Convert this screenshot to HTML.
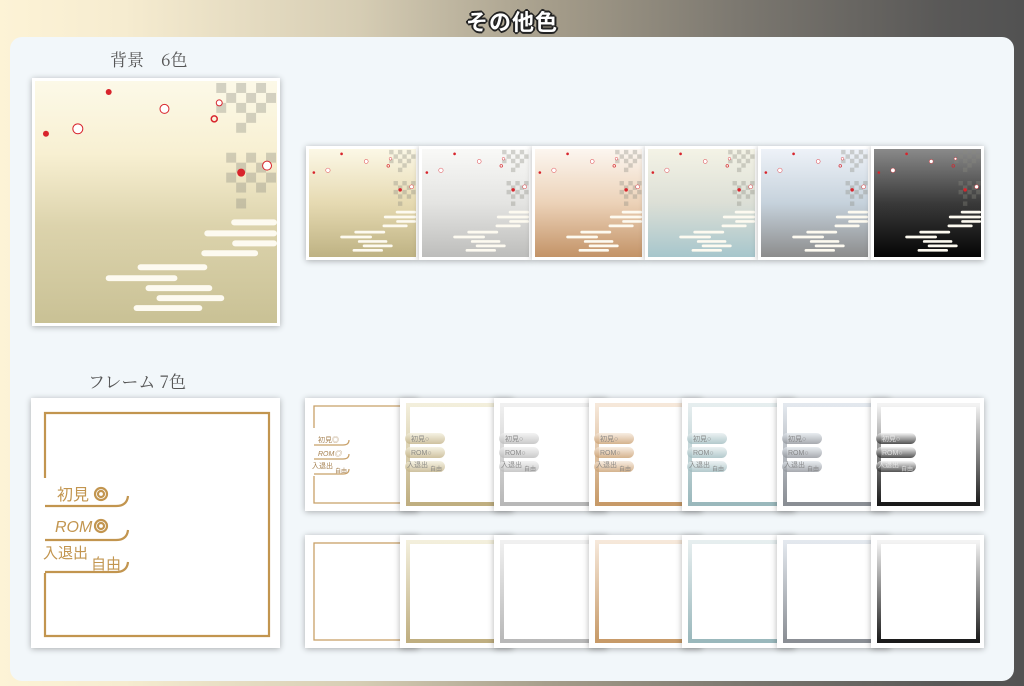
<!DOCTYPE html>
<html><head><meta charset="utf-8">
<style>
*{margin:0;padding:0;box-sizing:border-box}
body{width:1024px;height:686px;overflow:hidden;position:relative;font-family:"Liberation Sans","Noto Sans CJK JP",sans-serif;
background:linear-gradient(90deg,#fdf3d6 0%,#f6ecd0 12%,#d6cdb4 35%,#a29a88 55%,#7c7870 72%,#595857 92%,#525252 100%);}
.title{position:absolute;left:0;right:0;top:5px;text-align:center;font-size:22px;font-weight:bold;color:#fff;
text-shadow:-2px 0 #222,2px 0 #222,0 -2px #222,0 2px #222,-1px -1px #222,1px 1px #222,-1px 1px #222,1px -1px #222;letter-spacing:1px}
.panel{position:absolute;left:10px;top:37px;width:1004px;height:644px;background:#f2f7fa;border-radius:12px}
.lbl{position:absolute;font-size:17px;color:#555;font-family:"Noto Serif CJK SC","Liberation Serif",serif}
.card{position:absolute;background:#fff;box-shadow:0 1px 6px rgba(0,0,0,.3)}
.card svg{position:absolute}
</style></head><body>
<div class="title">その他色</div>
<div class="panel"></div>
<div class="lbl" style="left:110px;top:46px">背景　6色</div>
<div class="lbl" style="left:88px;top:368px">フレーム 7色</div>

<svg width="0" height="0" style="position:absolute">
<defs>
<symbol id="art" viewBox="0 0 243 243">
 <g fill="#8a8a80" opacity=".35">
  <rect x="182" y="2" width="10" height="10"/><rect x="202" y="2" width="10" height="10"/><rect x="222" y="2" width="10" height="10"/>
  <rect x="192" y="12" width="10" height="10"/><rect x="212" y="12" width="10" height="10"/><rect x="232" y="12" width="10" height="10"/>
  <rect x="182" y="22" width="10" height="10"/><rect x="202" y="22" width="10" height="10"/><rect x="222" y="22" width="10" height="10"/>
  <rect x="212" y="32" width="10" height="10"/><rect x="202" y="42" width="10" height="10"/>
  <rect x="192" y="72" width="10" height="10"/><rect x="212" y="72" width="10" height="10"/><rect x="232" y="72" width="10" height="10"/>
  <rect x="202" y="82" width="10" height="10"/><rect x="222" y="82" width="10" height="10"/>
  <rect x="192" y="92" width="10" height="10"/><rect x="212" y="92" width="10" height="10"/><rect x="232" y="92" width="10" height="10"/>
  <rect x="202" y="102" width="10" height="10"/><rect x="222" y="102" width="10" height="10"/>
  <rect x="202" y="118" width="10" height="10"/>
 </g>
 <g fill="#d8242c">
  <circle cx="74" cy="11" r="3"/><circle cx="11" cy="53" r="3"/><circle cx="207" cy="92" r="4"/>
  <circle cx="180" cy="38" r="3" fill="none" stroke="#d8242c" stroke-width="1.5"/>
 </g>
 <g fill="#fff" stroke="#d8242c" stroke-width="1">
  <circle cx="43" cy="48" r="5"/><circle cx="130" cy="28" r="4.5"/><circle cx="233" cy="85" r="4.5"/><circle cx="185" cy="22" r="3"/>
 </g>
 <g fill="#fdfaf0">
  <rect x="197" y="139" width="46" height="6" rx="3"/>
  <rect x="170" y="150" width="73" height="6" rx="3"/>
  <rect x="198" y="160" width="45" height="6" rx="3"/>
  <rect x="167" y="170" width="57" height="6" rx="3"/>
  <rect x="103" y="184" width="70" height="6" rx="3"/>
  <rect x="71" y="195" width="72" height="6" rx="3"/>
  <rect x="111" y="205" width="67" height="6" rx="3"/>
  <rect x="122" y="215" width="68" height="6" rx="3"/>
  <rect x="99" y="225" width="69" height="6" rx="3"/>
 </g>
</symbol>
</defs></svg>

<div class="card" style="left:32px;top:78px;width:248px;height:248px">
<svg style="left:3px;top:3px" width="242" height="242" viewBox="0 0 243 243">
<defs><linearGradient id="g0" x1="0" y1="0" x2="0" y2="1"><stop offset="0" stop-color="#fcf9e8"/><stop offset=".3" stop-color="#f8f0d2"/><stop offset=".6" stop-color="#dcd3ac"/><stop offset="1" stop-color="#c9c195"/></linearGradient></defs>
<rect width="243" height="243" fill="url(#g0)"/><use href="#art"/></svg></div>

<div class="card" style="left:306px;top:146px;width:113px;height:114px"><svg style="left:3px;top:3px" width="107" height="108" viewBox="0 0 243 243" preserveAspectRatio="none"><defs><linearGradient id="a1" x1="0" y1="0" x2="0" y2="1"><stop offset="0" stop-color="#fcf8e6"/><stop offset=".5" stop-color="#e6dab2"/><stop offset="1" stop-color="#beb283"/></linearGradient></defs><rect width="243" height="243" fill="url(#a1)"/><use href="#art"/></svg></div>
<div class="card" style="left:419px;top:146px;width:113px;height:114px"><svg style="left:3px;top:3px" width="107" height="108" viewBox="0 0 243 243" preserveAspectRatio="none"><defs><linearGradient id="a2" x1="0" y1="0" x2="0" y2="1"><stop offset="0" stop-color="#f9f9f7"/><stop offset=".5" stop-color="#e4e4e2"/><stop offset="1" stop-color="#bdbdbb"/></linearGradient></defs><rect width="243" height="243" fill="url(#a2)"/><use href="#art"/></svg></div>
<div class="card" style="left:532px;top:146px;width:113px;height:114px"><svg style="left:3px;top:3px" width="107" height="108" viewBox="0 0 243 243" preserveAspectRatio="none"><defs><linearGradient id="a3" x1="0" y1="0" x2="0" y2="1"><stop offset="0" stop-color="#fcf6f0"/><stop offset=".5" stop-color="#ecd2b8"/><stop offset="1" stop-color="#c39367"/></linearGradient></defs><rect width="243" height="243" fill="url(#a3)"/><use href="#art"/></svg></div>
<div class="card" style="left:645px;top:146px;width:113px;height:114px"><svg style="left:3px;top:3px" width="107" height="108" viewBox="0 0 243 243" preserveAspectRatio="none"><defs><linearGradient id="a4" x1="0" y1="0" x2="0" y2="1"><stop offset="0" stop-color="#f4f3e6"/><stop offset=".5" stop-color="#dcdfd6"/><stop offset="1" stop-color="#a7c6cc"/></linearGradient></defs><rect width="243" height="243" fill="url(#a4)"/><use href="#art"/></svg></div>
<div class="card" style="left:758px;top:146px;width:113px;height:114px"><svg style="left:3px;top:3px" width="107" height="108" viewBox="0 0 243 243" preserveAspectRatio="none"><defs><linearGradient id="a5" x1="0" y1="0" x2="0" y2="1"><stop offset="0" stop-color="#eef2f8"/><stop offset=".5" stop-color="#c6d2dc"/><stop offset="1" stop-color="#8c8c8c"/></linearGradient></defs><rect width="243" height="243" fill="url(#a5)"/><use href="#art"/></svg></div>
<div class="card" style="left:871px;top:146px;width:113px;height:114px"><svg style="left:3px;top:3px" width="107" height="108" viewBox="0 0 243 243" preserveAspectRatio="none"><defs><linearGradient id="a6" x1="0" y1="0" x2="0" y2="1"><stop offset="0" stop-color="#8a8a8a"/><stop offset=".5" stop-color="#3a3a3a"/><stop offset="1" stop-color="#050505"/></linearGradient></defs><rect width="243" height="243" fill="url(#a6)"/><use href="#art"/></svg></div>

<div class="card" style="left:31px;top:398px;width:249px;height:250px">
<svg style="left:0;top:0" width="249" height="250" viewBox="0 0 249 250">
<g fill="none" stroke="#c2954f" stroke-width="2.2">
<path d="M14 80 V15 H238 V238 H14 V175"/>
<path d="M14 108 H85 Q96 108 97 98"/>
<path d="M14 142 H85 Q96 142 97 132"/>
<path d="M14 174 H85 Q96 174 97 164"/>
<circle cx="70" cy="96" r="6"/><circle cx="70" cy="96" r="3"/>
<circle cx="70" cy="128" r="6"/><circle cx="70" cy="128" r="3"/>
</g>
<g fill="#c2954f" font-family="Liberation Sans,Noto Sans CJK JP,sans-serif">
<text x="26" y="102" font-size="16">初見</text>
<text x="24" y="134" font-size="16" font-style="italic">ROM</text>
<text x="12" y="160" font-size="15">入退出</text>
<text x="60" y="171" font-size="15">自由</text>
</g></svg></div>

<div id="frames"></div>
<script>
var cols=[
 null,
 ['#f3efdc','#bfae80'],['#f0f0f0','#b8b8b8'],['#f6e8da','#c79a68'],
 ['#e6eeef','#9ab8bc'],['#e3e8ee','#8a8e94'],['#f3f3f3','#1a1a1a']];
var xs=[305,400,494,589,682,777,871];
var h='';
[398,535].forEach(function(y,row){
 for(var i=0;i<7;i++){
  var x=xs[i],c=cols[i],s='';
  var id='f'+row+i;
  if(!c){
   if(row) s+='<rect x="9" y="8" width="96" height="97" fill="none" stroke="#c8a068" stroke-width="1.3"/>';
   else {
    s+='<path d="M9 30 V8 H105 V105 H9 V78" fill="none" stroke="#c8a068" stroke-width="1.3"/>';
    s+='<g fill="none" stroke="#c8a068" stroke-width="1.2"><path d="M9 47 H38 Q44 47 44 42"/><path d="M9 61 H38 Q44 61 44 56"/><path d="M9 76 H38 Q44 76 44 71"/></g><g fill="#a58050" font-size="7" font-family="Liberation Sans,Noto Sans CJK JP,sans-serif"><text x="13" y="44">初見◎</text><text x="13" y="58" font-style="italic">ROM◎</text><text x="7" y="70">入退出</text><text x="30" y="75" font-size="6">自由</text></g>';
   }
  } else {
   s+='<defs><linearGradient id="'+id+'" x1="0" y1="0" x2="0" y2="1"><stop offset="0" stop-color="'+c[0]+'"/><stop offset="1" stop-color="'+c[1]+'"/></linearGradient></defs>';
   s+='<rect x="8" y="7" width="99" height="99" fill="none" stroke="url(#'+id+')" stroke-width="4"/>';
   if(!row){
    s+='<g fill="url(#'+id+')" opacity=".75"><rect x="5" y="35" width="40" height="11" rx="5.5"/><rect x="5" y="49" width="40" height="11" rx="5.5"/><rect x="5" y="63" width="40" height="11" rx="5.5"/></g><g fill="'+(i==6?'#eee':'#777')+'" font-size="7" font-family="Liberation Sans,Noto Sans CJK JP,sans-serif" opacity=".8"><text x="11" y="43">初見○</text><text x="11" y="57">ROM○</text><text x="7" y="69">入退出</text><text x="30" y="73" font-size="6">自由</text></g>';
   }
  }
  h+='<div class="card" style="left:'+x+'px;top:'+y+'px;width:113px;height:113px"><svg width="113" height="113" viewBox="0 0 113 113">'+s+'</svg></div>';
 }
});
document.getElementById('frames').innerHTML=h;
</script>
</body></html>
